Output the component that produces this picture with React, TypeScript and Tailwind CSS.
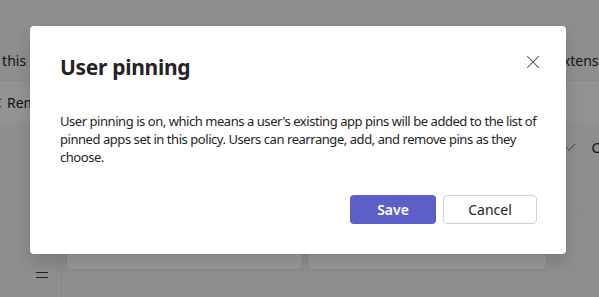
import { X, ChevronLeft, Check } from "lucide-react";

const font = { fontFamily: '"Noto Sans", "Open Sans", sans-serif' };

const GripIcon = () => (
  <svg width="14" height="8" viewBox="0 0 14 8" className="text-[#3a3a3a]">
    <path d="M1 1.5h12M1 6.5h12" stroke="currentColor" strokeWidth="1" />
  </svg>
);

const PolicyPage = () => {
  return (
    <div className="h-[297px] w-[599px] overflow-hidden bg-[#ededed] text-[#242424] text-[14px]">
      <div className="h-[40px]" />
      <div className="flex h-[40px] items-center justify-between">
        <span className="-ml-[10px] whitespace-nowrap">
          <span className="text-[#0f6cbd]">o</span> this policy
        </span>
        <span className="-mr-[27px] whitespace-nowrap">extensions</span>
      </div>
      <div className="flex h-[45px] items-center border-y border-[#e6e6e6] bg-[#f3f3f3]">
        <ChevronLeft className="-ml-[9px] h-[16px] w-[16px] stroke-[1.2]" />
        <span>Remove</span>
      </div>
      <div className="flex h-[85px] items-start justify-end pt-[12px]">
        <div className="-mr-[36px] flex items-center gap-[14px]">
          <Check className="h-[13px] w-[13px] stroke-[1.2]" />
          <span>Cancel</span>
        </div>
      </div>
      <div className="h-[44px] border-t border-[#e4e4e4]" />
      <div className="flex h-[43px]">
        <div className="flex w-[62px] items-start justify-start border-r border-[#e2e2e2] pt-[17px] pl-[35px]">
          <GripIcon />
        </div>
        <div className="flex flex-1 flex-col">
          <div className="flex h-[16px] gap-[4px] px-[4px]">
            <div className="flex-1 rounded-b-[6px] border-x border-b border-[#e2e2e2] bg-white" />
            <div className="w-[240px] rounded-b-[6px] border-x border-b border-[#e2e2e2] bg-white" />
            <div className="w-[44px]" />
          </div>
        </div>
      </div>
    </div>
  );
};

const UserPinningDialog = () => {
  return (
    <div className="absolute left-[30px] top-[26px] flex h-[228px] w-[536px] flex-col rounded-[4px] bg-white pl-[30px] pr-[29px] pt-[26px] pb-[30px] text-[#242424] shadow-[0_8px_16px_rgba(0,0,0,0.14)]">
      <div className="flex items-start justify-between">
        <h2 className="text-[21px] leading-[30px] font-bold tracking-[-0.3px]">User pinning</h2>
        <button className="-mt-[1px] -mr-[7px] flex h-[22px] w-[22px] items-center justify-center text-[#424242]">
          <X className="h-[22px] w-[22px] stroke-[1.1]" />
        </button>
      </div>
      <p className="mt-[30px] -mr-[12px] text-[13px] leading-[18px] tracking-[-0.45px]">
        User pinning is on, which means a user's existing app pins will be added to the list of
        pinned apps set in this policy. Users can rearrange, add, and remove pins as they choose.
      </p>
      <div className="mt-auto flex justify-end gap-[7px]">
        <button className="h-[29px] w-[86px] rounded-[4px] bg-[#5b5fc7] text-[14px] font-semibold text-white">
          Save
        </button>
        <button className="h-[29px] w-[94px] rounded-[4px] border border-[#d1d1d1] bg-white text-[14px] text-[#242424]">
          Cancel
        </button>
      </div>
    </div>
  );
};

export default function App() {
  return (
    <div className="relative h-[297px] w-[599px] overflow-hidden" style={font}>
      <PolicyPage />
      <div className="absolute inset-0 bg-black/40" />
      <UserPinningDialog />
    </div>
  );
}
